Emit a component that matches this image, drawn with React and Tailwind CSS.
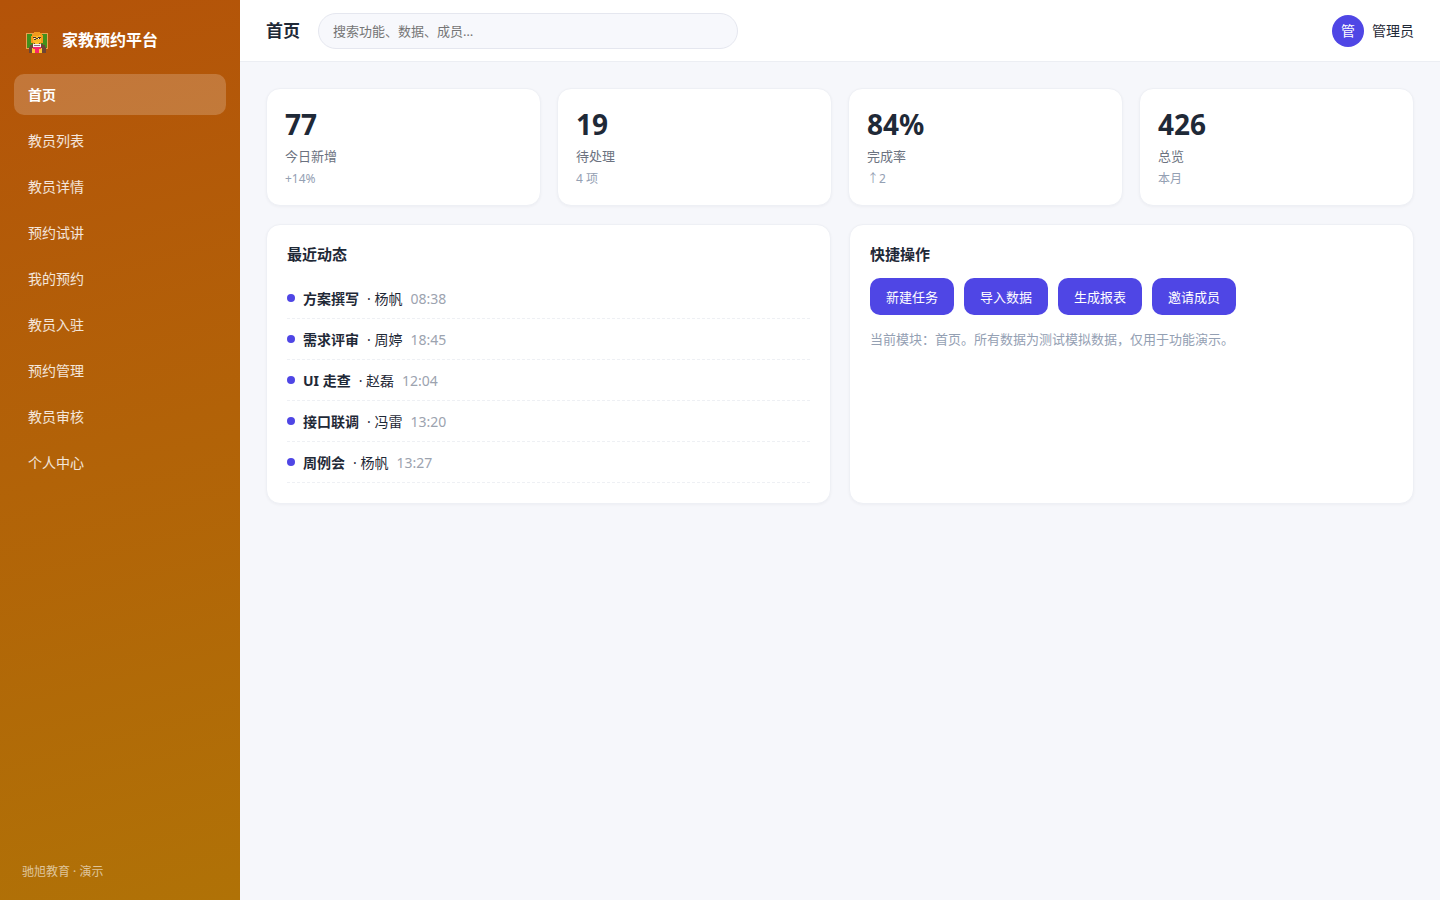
const NAV = ["首页", "教员列表", "教员详情", "预约试讲", "我的预约", "教员入驻", "预约管理", "教员审核", "个人中心"];

const STATS = [
  { value: "77", label: "今日新增", note: "+14%" },
  { value: "19", label: "待处理", note: "4 项" },
  { value: "84%", label: "完成率", note: "↑2" },
  { value: "426", label: "总览", note: "本月" },
];

const FEED = [
  { title: "方案撰写", who: "杨帆", time: "08:38" },
  { title: "需求评审", who: "周婷", time: "18:45" },
  { title: "UI 走查", who: "赵磊", time: "12:04" },
  { title: "接口联调", who: "冯雷", time: "13:20" },
  { title: "周例会", who: "杨帆", time: "13:27" },
];

const ACTIONS = ["新建任务", "导入数据", "生成报表", "邀请成员"];

function TeacherIcon() {
  return (
    <svg viewBox="0 0 22 22" shapeRendering="crispEdges" className="mt-1.5 size-[22px] shrink-0" aria-hidden="true">
      <rect x="0" y="1" width="22" height="16" fill="#e8a050" />
      <rect x="1" y="2" width="20" height="14" fill="#42901c" />
      <path d="M8 0h6v1h2v2h1v8h-2v1H7v-1H5V4h1V2h2z" fill="#f39a1c" />
      <path d="M7 4h6V3h1v1h1v6h-1v2H8v-2H7z" fill="#fdb92a" />
      <path d="M7 5h3v1H7zM12 5h3v1h-3zM10 6h2v1h-2zM8 7h2v1H8zM13 6h1v1h-1z" fill="#46342f" />
      <path d="M8 6h1v1H8zM12 6h1v1h-1z" fill="#fff3dc" />
      <path d="M3 21v-6h1v-2h2v-1h2v-1h6v1h3v1h2v2h1v6z" fill="#6d4536" />
      <path d="M9 10h4v2h-4z" fill="#fdc62f" />
      <path d="M6 16h10v5H6z" fill="#fdc62f" />
      <rect x="7" y="12" width="8" height="3" fill="#f3f1f5" />
      <rect x="8" y="13" width="6" height="1" fill="#8d7478" />
      <path d="M7 15h8v2h-2v4H9v-4H7z" fill="#f8266b" />
    </svg>
  );
}

export default function App() {
  return (
    <div className="flex min-h-screen bg-[#f6f7fb] font-['Noto_Sans','Noto_Sans_CJK_SC',sans-serif] text-sm leading-5 text-[#1f2937]">
      <aside className="flex w-60 shrink-0 flex-col bg-[linear-gradient(165deg,#b45309,#b07207)] px-3.5 py-5 text-white">
        <div className="mb-3.5 flex h-10 items-center gap-3.5 px-3">
          <TeacherIcon />
          <span className="text-base font-bold">家教预约平台</span>
        </div>
        <nav className="flex flex-col gap-[5px]">
          {NAV.map((name, i) => (
            <a
              key={name}
              href="#"
              aria-current={i === 0 ? "page" : undefined}
              className={
                i === 0
                  ? "flex h-[41px] items-center rounded-[10px] bg-white/20 px-3.5 font-bold"
                  : "flex h-[41px] items-center rounded-[10px] px-3.5 text-white/85"
              }
            >
              {name}
            </a>
          ))}
        </nav>
        <p className="mt-auto px-2 text-xs leading-4 text-white/60">驰旭教育 · 演示</p>
      </aside>

      <div className="flex min-w-0 flex-1 flex-col">
        <header className="flex h-[62px] items-center gap-[18px] border-b border-[#eceef3] bg-white px-[26px]">
          <h1 className="shrink-0 text-[17px] font-bold">首页</h1>
          <input
            type="search"
            aria-label="搜索"
            placeholder="搜索功能、数据、成员…"
            className="h-9 w-full max-w-[420px] rounded-full border border-[#e5e7ef] bg-[#f7f8fc] px-3.5 text-[13px] outline-none placeholder:text-[#757575]"
          />
          <div className="ml-auto flex shrink-0 items-center gap-2">
            <span className="flex size-8 items-center justify-center rounded-full bg-[#4f46e5] text-white">管</span>
            <span>管理员</span>
          </div>
        </header>

        <main className="flex flex-col gap-[18px] p-[26px]">
          <section className="grid grid-cols-4 gap-4">
            {STATS.map((s) => (
              <div key={s.label} className="rounded-[14px] border border-[#eef0f5] bg-white p-[18px] shadow-[0_1px_3px_rgba(15,23,42,0.04)]">
                <p className="text-[28px] leading-[34px] font-bold">{s.value}</p>
                <p className="mt-[5px] text-[13px] leading-5 text-[#6b7280]">{s.label}</p>
                <p className="mt-[5px] text-xs leading-4 text-[#94a0b3]">{s.note}</p>
              </div>
            ))}
          </section>

          <section className="grid grid-cols-2 gap-[18px]">
            <div className="rounded-[14px] border border-[#eef0f5] bg-white p-5 shadow-[0_1px_3px_rgba(15,23,42,0.04)]">
              <h2 className="mb-[15px] text-[15px] leading-[18px] font-bold">最近动态</h2>
              <ul>
                {FEED.map((f) => (
                  <li key={f.title} className="flex h-[41px] items-center gap-2 border-b border-dashed border-[#eef0f4] pt-0.5">
                    <i className="mb-0.5 size-2 rounded-full bg-[#4f46e5]" />
                    <b className="font-bold">{f.title}</b>
                    <span>· {f.who}</span>
                    <time className="text-[#9ca3af]">{f.time}</time>
                  </li>
                ))}
              </ul>
            </div>
            <div className="rounded-[14px] border border-[#eef0f5] bg-white p-5 shadow-[0_1px_3px_rgba(15,23,42,0.04)]">
              <h2 className="mb-[15px] text-[15px] leading-[18px] font-bold">快捷操作</h2>
              <div className="flex flex-wrap gap-2.5">
                {ACTIONS.map((a) => (
                  <button key={a} type="button" className="h-[37px] rounded-[10px] bg-[#4f46e5] px-4 text-[13px] text-white">
                    {a}
                  </button>
                ))}
              </div>
              <p className="mt-3.5 text-[13px] leading-5 text-[#94a0b3]">
                当前模块：首页。所有数据为测试模拟数据，仅用于功能演示。
              </p>
            </div>
          </section>
        </main>
      </div>
    </div>
  );
}
